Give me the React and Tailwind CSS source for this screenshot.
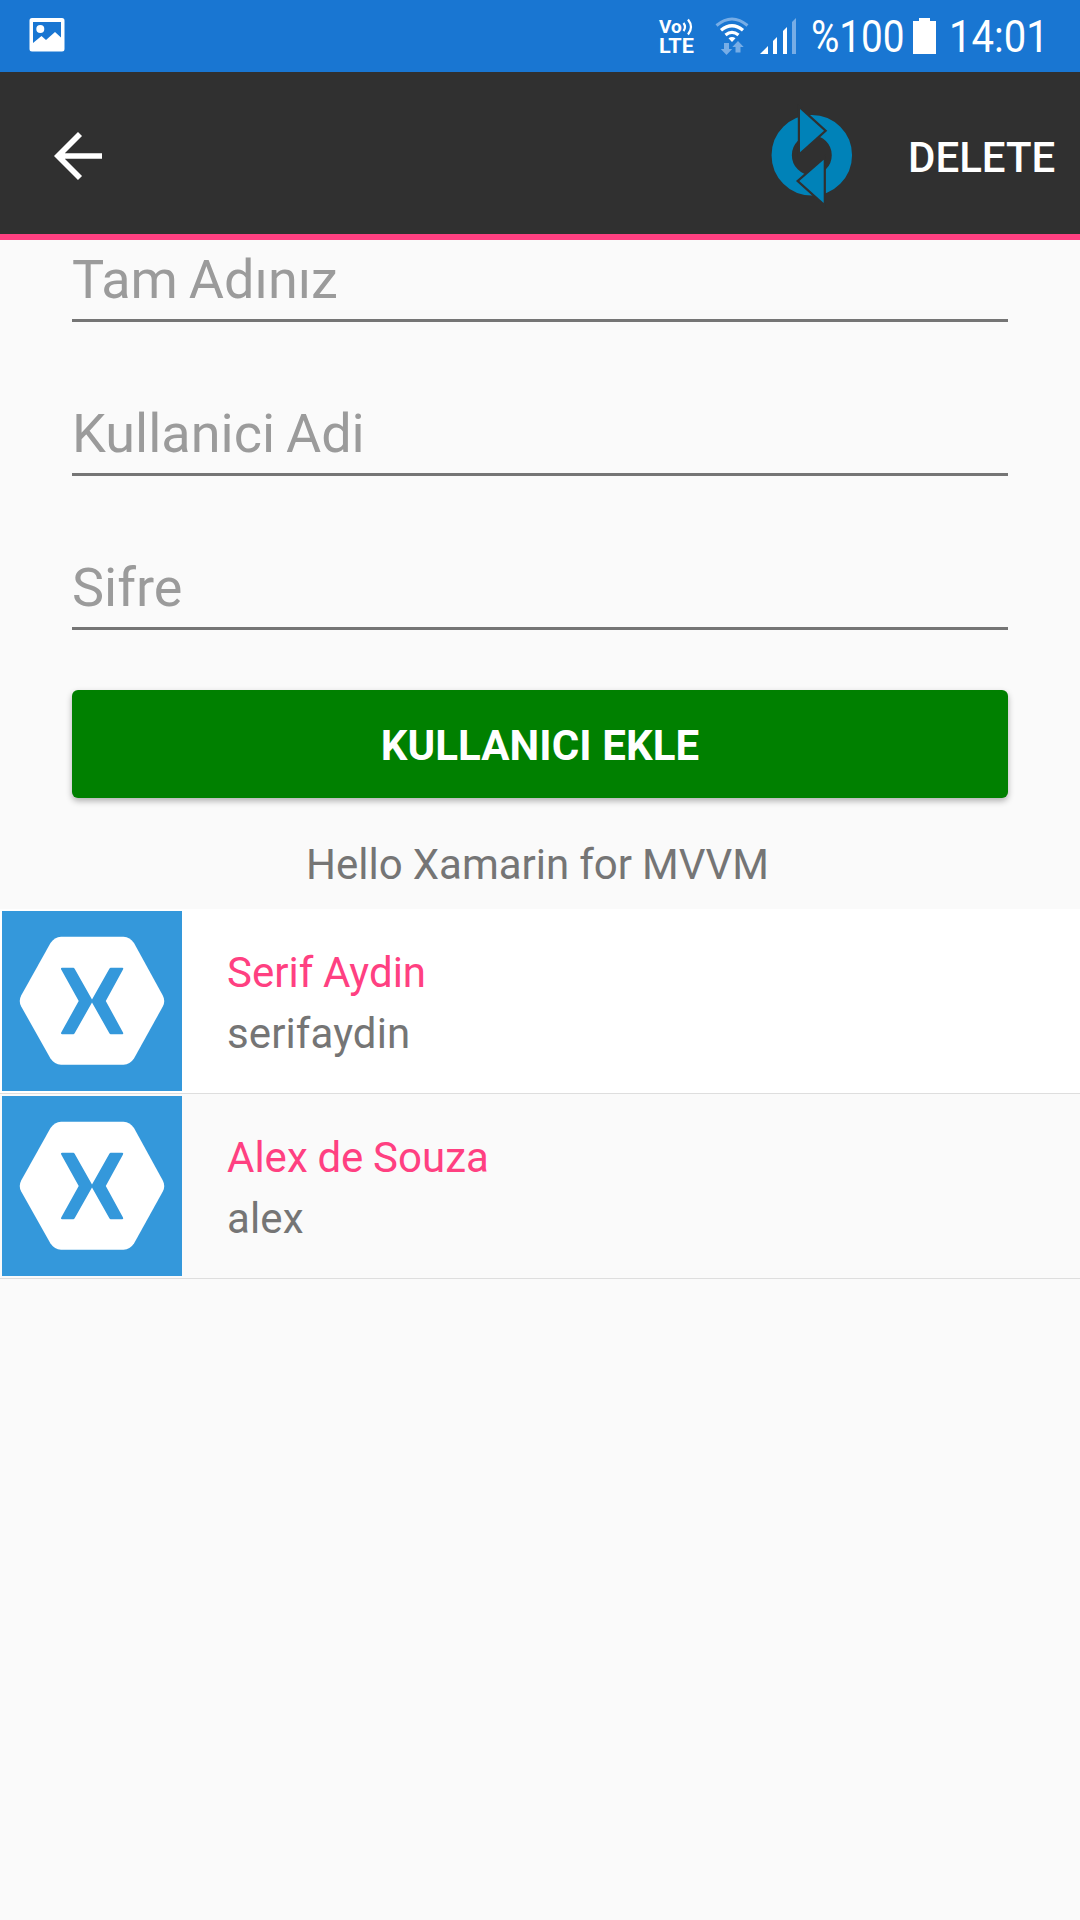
const users = [
  { name: "Serif Aydin", username: "serifaydin" },
  { name: "Alex de Souza", username: "alex" },
];

function PictureIcon() {
  return (
    <svg className="ml-[29px] h-9 w-9" viewBox="0 0 36 36">
      <path
        fill="#fff"
        fillRule="evenodd"
        d="M3 0H33Q35.5 0 35.5 2.5V31Q35.5 33.5 33 33.5H3Q.5 33.5 .5 31V2.5Q.5 0 3 0ZM4 4V25L12.5 18L17 22L26 14L32 19.500V4Z"
      />
      <circle cx="11.300" cy="11" r="4" fill="#fff" />
    </svg>
  );
}

function WifiIcon() {
  return (
    <svg className="ml-5 h-[38px] w-[34px] shrink-0" viewBox="0 0 34 38" fill="none">
      <path d="M1.500 8.500Q17 -4.500 32.500 8.500" stroke="#77ade6" strokeWidth="3" />
      <path d="M6 13.300Q17 4.300 28 13.300M10.500 18Q17 12.800 23.500 18" stroke="#fff" strokeWidth="3.300" />
      <path d="M13.500 21.200Q17 18.800 20.500 21.200L17 25Z" fill="#fff" />
      <path d="M9 26h5v6h3.200l-5.700 6l-5.700-6H9ZM20.500 35.500h5v-5.500h3.200l-5.700-6l-5.700 6h3.200Z" fill="#77ade6" />
    </svg>
  );
}

function SignalIcon() {
  return (
    <svg className="ml-[11px] h-9 w-9 shrink-0" viewBox="0 0 36 36" fill="#fff">
      <path d="M0 36L8 28V36ZM13 23L17 19V36H13ZM23 13L27 9V36H23Z" />
      <path d="M32 4L36 0V36H32Z" fill="#77ade6" />
    </svg>
  );
}

function StatusBar() {
  return (
    <div className="flex h-[72px] items-center bg-[#1976d2] text-white">
      <PictureIcon />
      <div className="ml-[594px] flex w-[36px] shrink-0 flex-col gap-px pt-[3px]">
        <div className="flex h-[17px] items-center">
          <span className="text-[19px] leading-[17px] font-bold">Vo</span>
          <svg className="h-[18px] w-3 shrink-0" viewBox="0 0 12 18" fill="none" stroke="#fff" strokeWidth="2.200">
            <path d="M1.500 5Q4.500 9 1.500 13M6 1.500Q12 9 6 16.500" />
          </svg>
        </div>
        <span className="w-fit origin-left scale-x-[1.03] text-[21px] leading-[21px] font-bold">LTE</span>
      </div>
      <WifiIcon />
      <SignalIcon />
      <div className="ml-[15px] w-[92px] shrink-0 pt-0.5 text-[45px] leading-[60px]">
        <span className="inline-block origin-left scale-x-[0.86]">%100</span>
      </div>
      <svg className="ml-2.5 h-9 w-[23px] shrink-0" viewBox="0 0 23 36" fill="#fff">
        <path d="M6 0H17V3H23V36H0V3H6Z" />
      </svg>
      <div className="ml-[13px] w-[92px] shrink-0 pt-0.5 text-[45px] leading-[60px]">
        <span className="inline-block origin-left scale-x-[0.89]">14:01</span>
      </div>
    </div>
  );
}

function SyncIcon() {
  return (
    <svg className="h-[104px] w-[88px]" viewBox="0 0 88 104">
      <circle cx="43.800" cy="51.200" r="30.100" fill="none" stroke="#0082b8" strokeWidth="20.300" />
      <g fill="#0082b8" stroke="#303030" strokeWidth="4.400" style={{ paintOrder: "stroke" }}>
        <path d="M32 5L56 26.700L32 48.300Z" />
        <path d="M55.700 55.700L31.300 77L55.700 99Z" />
      </g>
    </svg>
  );
}

function Toolbar() {
  return (
    <header className="flex h-[168px] items-center border-b-[6px] border-[#ff4081] bg-[#303030] pt-1.5 text-white">
      <button className="ml-[54px] flex h-12 w-12 items-center">
        <svg className="h-12 w-12" viewBox="0 0 48 48" fill="none" stroke="#fff" strokeWidth="5.700">
          <path d="M48 24H6M26 2L4 24L26 46" />
        </svg>
      </button>
      <button className="ml-[666px]">
        <SyncIcon />
      </button>
      <button className="ml-[52px] pt-1 text-[42px] leading-[50px] font-medium">DELETE</button>
    </header>
  );
}

function Field({ label }) {
  return (
    <div className="h-[82px] border-b-[3px] border-[#757575] text-[54px] leading-[79px] text-[#9b9b9b] [word-spacing:-2.5px]">
      {label}
    </div>
  );
}

function XamarinLogo() {
  return (
    <svg className="h-[180px] w-[180px] shrink-0" viewBox="0 0 180 180">
      <rect width="180" height="180" fill="#3498db" />
      <path
        fill="#fff"
        d="M59 25.700H121.500Q128 26 132 32L160.800 84.500Q163.700 90 160.800 95.500L132 147.500Q128 153.500 121.500 153.800H59Q52.500 153.500 48.500 147.500L19.200 95.500Q16.300 90 19.200 84.500L48.500 32Q52.500 26 59 25.700Z"
      />
      <path
        fill="#3498db"
        d="M60 56.700H71.500L72.500 57.500L90 88.500L107.500 57.500L108.500 56.700H120.300Q121.800 57 121 58.500L103.800 90L121 121.500Q121.800 123 120.300 123.300H108.500L107.500 122.500L90 91.500L72.500 122.500L71.500 123.300H60Q58.400 123 59.200 121.500L76.700 90L59.200 58.500Q58.400 57 60 56.700Z"
      />
    </svg>
  );
}

function UserRow({ user }) {
  return (
    <li className="flex h-[185px] border-b border-[#dedede] py-0.5 pl-0.5 first:bg-white">
      <XamarinLogo />
      <div className="ml-[45px] pt-[31px] text-[42px] leading-[61px]">
        <p className="text-[#ff4081] [word-spacing:-0.7px]">{user.name}</p>
        <p className="tracking-[0.1px] text-[#757575]">{user.username}</p>
      </div>
    </li>
  );
}

export default function App() {
  return (
    <div className="h-[1920px] w-[1080px] overflow-hidden bg-[#fafafa] font-['Roboto',sans-serif]">
      <StatusBar />
      <Toolbar />
      <main>
        <div className="flex flex-col gap-[72px] px-[72px]">
          <Field label="Tam Adınız" />
          <Field label="Kullanici Adi" />
          <Field label="Sifre" />
        </div>
        <div className="mt-[60px] px-[72px]">
          <button className="block h-[108px] w-full rounded-md bg-[#008000] pt-[3px] text-[42px] leading-[50px] font-bold tracking-[0.1px] text-white shadow-[0_3px_6px_rgba(0,0,0,0.3)]">
            KULLANICI EKLE
          </button>
        </div>
        <p className="flex h-[111px] items-center justify-center pt-[22px] pr-[5px] text-[42px] text-[#757575] [word-spacing:-0.4px]">
          Hello Xamarin for MVVM
        </p>
        <ul>
          {users.map((user) => (
            <UserRow key={user.username} user={user} />
          ))}
        </ul>
      </main>
    </div>
  );
}
